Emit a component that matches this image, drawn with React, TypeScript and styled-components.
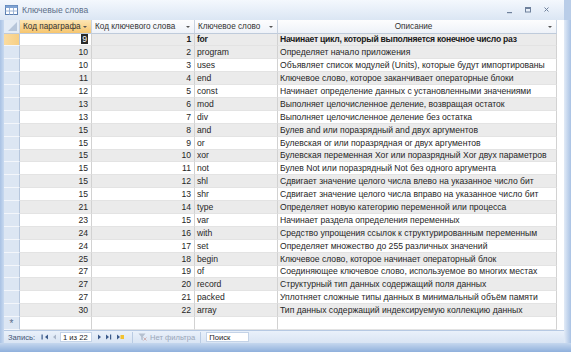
import React from 'react';
import styled, { createGlobalStyle, css } from 'styled-components';

const GlobalStyle = createGlobalStyle`
  html, body { margin: 0; padding: 0; background: #fff; }
  body { font-family: "Liberation Sans", Arial, sans-serif; }
`;

const COLS = '16px 72px 103px 83px 279px';

type Keyword = { para: number; id: number; word: string; text: string };

const rows: Keyword[] = [
  { para: 9, id: 1, word: 'for', text: 'Начинает цикл, который выполняется конечное число раз' },
  { para: 10, id: 2, word: 'program', text: 'Определяет начало приложения' },
  { para: 10, id: 3, word: 'uses', text: 'Объявляет список модулей (Units), которые будут импортированы' },
  { para: 11, id: 4, word: 'end', text: 'Ключевое слово, которое заканчивает операторные блоки' },
  { para: 12, id: 5, word: 'const', text: 'Начинает определение данных с установленными значениями' },
  { para: 13, id: 6, word: 'mod', text: 'Выполняет целочисленное деление, возвращая остаток' },
  { para: 13, id: 7, word: 'div', text: 'Выполняет целочисленное деление без остатка' },
  { para: 15, id: 8, word: 'and', text: 'Булев and или поразрядный and двух аргументов' },
  { para: 15, id: 9, word: 'or', text: 'Булевская or или поразрядная or двух аргументов' },
  { para: 15, id: 10, word: 'xor', text: 'Булевская переменная Xor или поразрядный Xor двух параметров' },
  { para: 15, id: 11, word: 'not', text: 'Булев Not или поразрядный Not без одного аргумента' },
  { para: 15, id: 12, word: 'shl', text: 'Сдвигает значение целого числа влево на указанное число бит' },
  { para: 15, id: 13, word: 'shr', text: 'Сдвигает значение целого числа вправо на указанное число бит' },
  { para: 21, id: 14, word: 'type', text: 'Определяет новую категорию переменной или процесса' },
  { para: 23, id: 15, word: 'var', text: 'Начинает раздела определения переменных' },
  { para: 24, id: 16, word: 'with', text: 'Средство упрощения ссылок к структурированным переменным' },
  { para: 24, id: 17, word: 'set', text: 'Определяет множество до 255 различных значений' },
  { para: 25, id: 18, word: 'begin', text: 'Ключевое слово, которое начинает операторный блок' },
  { para: 27, id: 19, word: 'of', text: 'Соединяющее ключевое слово, используемое во многих местах' },
  { para: 27, id: 20, word: 'record', text: 'Структурный тип данных содержащий поля данных' },
  { para: 27, id: 21, word: 'packed', text: 'Уплотняет сложные типы данных в минимальный объём памяти' },
  { para: 30, id: 22, word: 'array', text: 'Тип данных содержащий индексируемую коллекцию данных' },
];

const Window = styled.div`
  width: 571px;
  height: 352px;
  display: flex;
  flex-direction: column;
  overflow: hidden;
  background: #fff;
`;

const TitleBar = styled.div`
  height: 20px;
  flex: none;
  display: flex;
  align-items: center;
  padding: 0 14px 0 5px;
  gap: 4px;
  background: linear-gradient(#f4f8fd, #dbe6f4);
  border-right: 7px solid #b9cde8;
`;

const TitleText = styled.span`
  font-size: 8.5px;
  color: #5c6e88;
  flex: 1;
`;

const WinButtons = styled.div`
  display: flex;
  align-items: center;
  gap: 11px;
  color: #6f819c;
`;

const Middle = styled.div`
  flex: 1;
  display: flex;
  min-height: 0;
`;

const LeftEdge = styled.div`
  width: 4px;
  flex: none;
  background: linear-gradient(90deg, #a9c2e4, #c9daf0);
`;

const RightEdge = styled.div`
  width: 7px;
  flex: none;
  background: linear-gradient(90deg, #e2ebf7, #a9c2e4);
`;

const BottomEdge = styled.div`
  height: 9px;
  flex: none;
  background: linear-gradient(#c5d7ee, #8fb0dc);
`;

const Sheet = styled.div`
  flex: 1;
  display: flex;
  flex-direction: column;
  background: #fff;
  min-width: 0;
`;

const Grid = styled.div`
  flex: 1;
`;

const HeaderRow = styled.div`
  display: grid;
  grid-template-columns: ${COLS};
  height: 13.5px;
  font-size: 8.2px;
  color: #333;
`;

const HeaderCell = styled.div<{ $active?: boolean; $center?: boolean }>`
  position: relative;
  display: flex;
  align-items: center;
  justify-content: ${p => (p.$center ? 'center' : 'flex-start')};
  padding-left: 3px;
  padding-right: 10px;
  border-right: 1px solid #c9d3e0;
  border-bottom: 1px solid #bfcbdb;
  background: ${p =>
    p.$active ? 'linear-gradient(#fde6b4, #f6c56e)' : 'linear-gradient(#fdfdfe, #eef2f8)'};
  white-space: nowrap;
  overflow: hidden;
`;

const Arrow = styled.span`
  position: absolute;
  right: 4px;
  top: 50%;
  margin-top: -1px;
  width: 0;
  height: 0;
  border-left: 2px solid transparent;
  border-right: 2px solid transparent;
  border-top: 2px solid #555;
`;

const Corner = styled.div`
  border-right: 1px solid #c9d3e0;
  border-bottom: 1px solid #bfcbdb;
  background: #e4ecf6;
  display: flex;
  align-items: flex-end;
  justify-content: flex-end;
  padding: 2px;
`;

const Row = styled.div`
  display: grid;
  grid-template-columns: ${COLS};
  height: 12.9px;
  font-size: 8.6px;
  color: #262626;
`;

const Selector = styled.div<{ $current?: boolean }>`
  background: ${p => (p.$current ? 'linear-gradient(90deg, #fbdca0, #f7cf85)' : '#dce6f3')};
  border-right: 1px solid #b7c7dd;
  border-bottom: 1px solid #f3f6fb;
  font-size: 10px;
  color: #5a6d8a;
  display: flex;
  align-items: center;
  justify-content: center;
`;

const Cell = styled.div<{ $shade?: boolean; $num?: boolean; $bold?: boolean; $white?: boolean }>`
  display: flex;
  align-items: center;
  justify-content: ${p => (p.$num ? 'flex-end' : 'flex-start')};
  padding: 0 3px 0 2px;
  background: ${p => (p.$white ? '#fff' : p.$shade ? '#ebebeb' : '#fff')};
  border-right: 1px solid #d2d2d2;
  border-bottom: 1px solid #e3e3e3;
  white-space: nowrap;
  overflow: hidden;
  ${p =>
    p.$bold &&
    css`
      font-weight: bold;
      letter-spacing: -0.25px;
      color: #1a1a1a;
    `}
`;

const Selected = styled.span`
  background: #2a2a2a;
  color: #fff;
  padding: 0 1px;
  line-height: 10px;
`;

const NavBar = styled.div`
  height: 13px;
  flex: none;
  display: flex;
  align-items: center;
  padding-left: 4px;
  background: linear-gradient(#eaf1fa, #d7e3f3);
  border-top: 1px solid #b6c9e3;
  font-size: 7.6px;
  color: #3f5575;
`;

const NavLabel = styled.span`
  margin-right: 6px;
`;

const NavIcon = styled.svg`
  flex: none;
  margin-right: 3px;
`;

const RecordBox = styled.div<{ $w: number }>`
  width: ${p => p.$w}px;
  height: 10px;
  background: #fff;
  border: 1px solid #c4d3e7;
  display: flex;
  align-items: center;
  padding-left: 2px;
  margin-right: 5px;
  color: #222;
  box-sizing: border-box;
`;

const Divider = styled.div`
  width: 1px;
  height: 11px;
  background: #b9cbe3;
  margin: 0 5px;
`;

const FilterText = styled.span`
  color: #9aa6b8;
  margin-left: 3px;
`;

const Tri: React.FC<{ dir: 'l' | 'r'; bar?: boolean; faded?: boolean; star?: boolean }> = ({
  dir,
  bar,
  faded,
  star,
}) => {
  const fill = faded ? '#aab7ca' : '#3b5a8a';
  const w = bar || star ? 8 : 5;
  return (
    <NavIcon width={w} height={8} viewBox={`0 0 ${w} 8`}>
      {dir === 'l' ? (
        <>
          {bar && <rect x="0.5" y="1.5" width="1.2" height="5" fill={fill} />}
          <polygon points={`${w - 1},1.5 ${w - 4},4 ${w - 1},6.5`} fill={fill} />
        </>
      ) : (
        <>
          <polygon points="1,1.5 4,4 1,6.5" fill={fill} />
          {bar && <rect x="5" y="1.5" width="1.2" height="5" fill={fill} />}
          {star && <rect x="4.5" y="2" width="3.5" height="4" fill="#f2c230" />}
        </>
      )}
    </NavIcon>
  );
};

export default function App() {
  return (
    <Window>
      <GlobalStyle />
      <TitleBar>
        <svg width="13" height="10" viewBox="0 0 13 10">
          <rect x="0.5" y="0.5" width="12" height="9" fill="#fff" stroke="#5b7fb0" />
          <rect x="0.5" y="0.5" width="12" height="2.5" fill="#7fa3d3" />
          <line x1="4.5" y1="3" x2="4.5" y2="9.5" stroke="#9db5d6" />
          <line x1="8.5" y1="3" x2="8.5" y2="9.5" stroke="#9db5d6" />
          <line x1="0.5" y1="6" x2="12.5" y2="6" stroke="#9db5d6" />
        </svg>
        <TitleText>Ключевые слова</TitleText>
        <WinButtons>
          <svg width="7" height="8" viewBox="0 0 7 8">
            <rect x="1" y="6" width="5" height="1.2" fill="currentColor" />
          </svg>
          <svg width="8" height="8" viewBox="0 0 8 8">
            <rect x="1.5" y="1.5" width="5" height="4.5" fill="none" stroke="currentColor" />
            <rect x="1.5" y="1.5" width="5" height="1.5" fill="currentColor" />
          </svg>
          <svg width="7" height="8" viewBox="0 0 7 8">
            <path d="M1.5 1.5 L5.5 5.5 M5.5 1.5 L1.5 5.5" stroke="currentColor" strokeWidth="1" />
          </svg>
        </WinButtons>
      </TitleBar>
      <Middle>
        <LeftEdge />
        <Sheet>
          <Grid>
            <HeaderRow>
              <Corner>
                <svg width="9" height="9" viewBox="0 0 9 9">
                  <polygon points="9,0 9,9 0,9" fill="#b7c6da" />
                </svg>
              </Corner>
              <HeaderCell $active>
                Код параграфа<Arrow />
              </HeaderCell>
              <HeaderCell>
                Код ключевого слова<Arrow />
              </HeaderCell>
              <HeaderCell>
                Ключевое слово<Arrow />
              </HeaderCell>
              <HeaderCell $center>
                Описание<Arrow />
              </HeaderCell>
            </HeaderRow>
            {rows.map((r, i) => {
              const first = i === 0;
              const shade = i % 2 === 1 || first;
              return (
                <Row key={r.id}>
                  <Selector $current={first} />
                  <Cell $num $white={first} $shade={shade}>
                    {first ? <Selected>{r.para}</Selected> : r.para}
                  </Cell>
                  <Cell $num $shade={shade} $bold={first}>
                    {r.id}
                  </Cell>
                  <Cell $shade={shade} $bold={first}>
                    {r.word}
                  </Cell>
                  <Cell $shade={shade} $bold={first}>
                    {r.text}
                  </Cell>
                </Row>
              );
            })}
            <Row>
              <Selector>*</Selector>
              <Cell />
              <Cell />
              <Cell />
              <Cell />
            </Row>
          </Grid>
          <NavBar>
            <NavLabel>Запись:</NavLabel>
            <Tri dir="l" bar />
            <Tri dir="l" faded />
            <RecordBox $w={32}>1 из 22</RecordBox>
            <Tri dir="r" />
            <Tri dir="r" bar />
            <Tri dir="r" star />
            <Divider />
            <svg width="9" height="8" viewBox="0 0 9 8">
              <polygon points="0.5,0.5 7.5,0.5 4.8,3.8 4.8,7.5 3.2,6.5 3.2,3.8" fill="#b5c0cf" />
              <path d="M5.5 4.5 L8.5 7.5 M8.5 4.5 L5.5 7.5" stroke="#c9a3a3" strokeWidth="0.8" />
            </svg>
            <FilterText>Нет фильтра</FilterText>
            <Divider />
            <RecordBox $w={43}>Поиск</RecordBox>
          </NavBar>
        </Sheet>
        <RightEdge />
      </Middle>
      <BottomEdge />
    </Window>
  );
}
